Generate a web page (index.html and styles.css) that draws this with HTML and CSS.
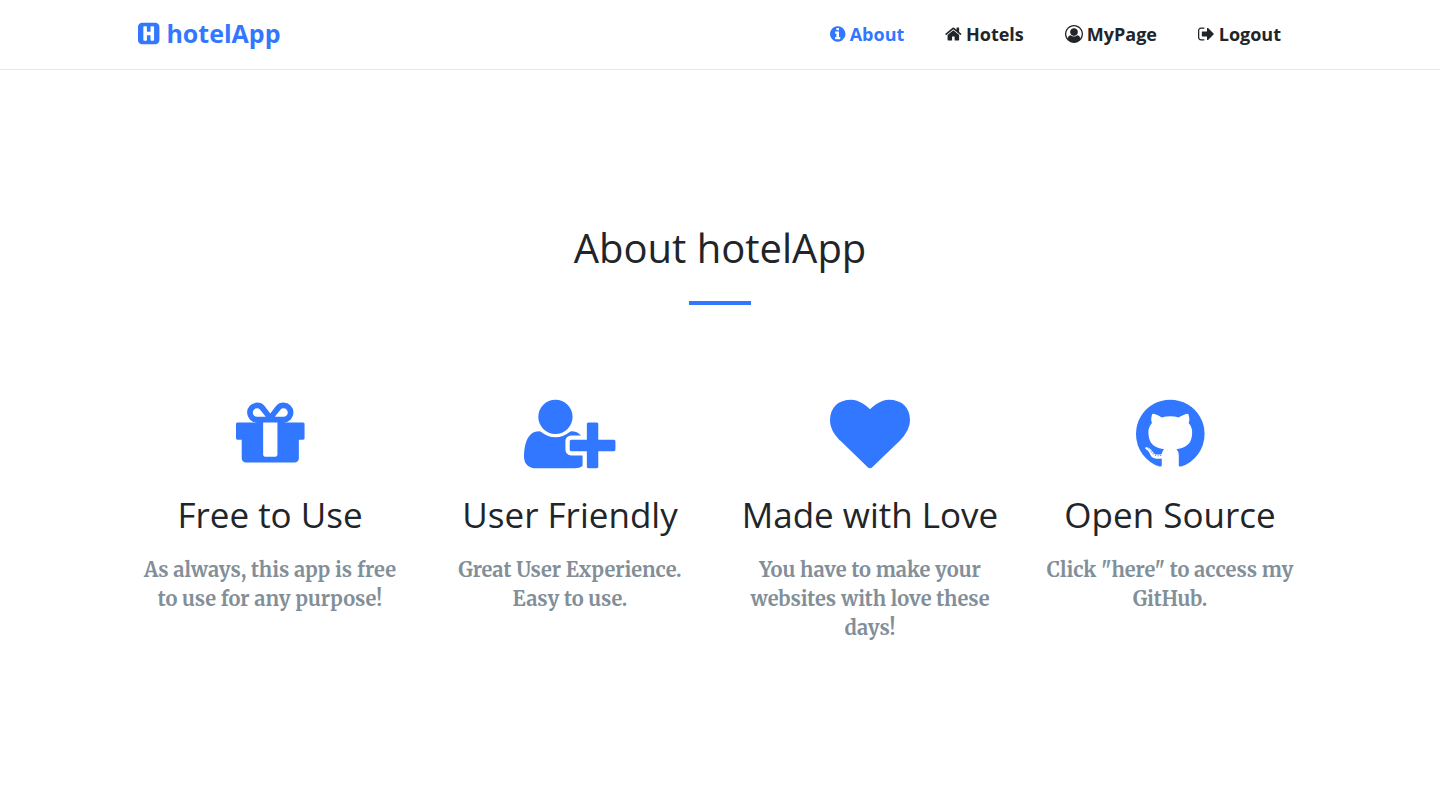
FILE: index.html
```html
<!DOCTYPE html>
<html lang="en">
<head>
<meta charset="utf-8">
<meta name="viewport" content="width=device-width, initial-scale=1">
<title>hotelApp</title>
<link rel="stylesheet" href="styles.css">
</head>
<body>
<header class="navbar">
  <div class="navbar-inner">
    <a class="brand" href="#">
      <svg class="icon" viewBox="128 0 1536 1792" aria-hidden="true"><path d="M1280 1344v-896q0-26-19-45t-45-19h-128q-26 0-45 19t-19 45v320h-256v-320q0-26-19-45t-45-19h-128q-26 0-45 19t-19 45v896q0 26 19 45t45 19h128q26 0 45-19t19-45v-320h256v320q0 26 19 45t45 19h128q26 0 45-19t19-45zm384-928v960q0 119-84.500 203.500t-203.500 84.500h-960q-119 0-203.500-84.500t-84.500-203.500v-960q0-119 84.500-203.500t203.500-84.500h960q119 0 203.500 84.500t84.500 203.500z"/></svg>
      <span>hotelApp</span>
    </a>
    <nav class="menu" aria-label="Main">
      <a class="menu-link active" href="#about">
        <svg class="icon" viewBox="128 0 1536 1792" aria-hidden="true"><path d="M1152 1376v-160q0-14-9-23t-23-9h-96v-512q0-14-9-23t-23-9h-320q-14 0-23 9t-9 23v160q0 14 9 23t23 9h96v320h-96q-14 0-23 9t-9 23v160q0 14 9 23t23 9h448q14 0 23-9t9-23zm-128-896v-160q0-14-9-23t-23-9h-192q-14 0-23 9t-9 23v160q0 14 9 23t23 9h192q14 0 23-9t9-23zm640 416q0 209-103 385.500t-279.500 279.500-385.500 103-385.500-103-279.500-279.500-103-385.500 103-385.500 279.500-279.500 385.500-103 385.500 103 279.500 279.500 103 385.500z"/></svg>
        <span>About</span>
      </a>
      <a class="menu-link" href="#hotels">
        <svg class="icon" viewBox="64 0 1664 1792" aria-hidden="true"><path d="M1472 992v480q0 26-19 45t-45 19h-384v-384h-256v384h-384q-26 0-45-19t-19-45v-480q0-1 .5-3t.5-3l575-474 575 474q1 2 1 6zm223-69l-62 74q-8 9-21 11h-3q-13 0-21-7l-692-577-692 577q-12 8-24 7-13-2-21-11l-62-74q-8-10-7-23.500t11-21.500l719-599q32-26 76-26t76 26l244 204v-195q0-14 9-23t23-9h192q14 0 23 9t9 23v408l219 182q10 8 11 21.500t-7 23.500z"/></svg>
        <span>Hotels</span>
      </a>
      <a class="menu-link" href="#mypage">
        <svg class="icon" viewBox="0 0 1792 1792" aria-hidden="true"><path d="M896 0q182 0 348 71t286 191 191 286 71 348q0 181-70.500 347t-190.500 286-286 191.500-349 71.500-349-71-285.500-191.500-190.500-286-71-347.500 71-348 191-286 286-191 348-71zm619 1351q149-205 149-455 0-156-61-298t-164-245-245-164-298-61-298 61-245 164-164 245-61 298q0 250 149 455 66-327 306-327 131 128 313 128t313-128q240 0 306 327zm-235-647q0-159-112.500-271.500t-271.500-112.500-271.500 112.500-112.500 271.500 112.500 271.500 271.500 112.500 271.500-112.500 112.500-271.500z"/></svg>
        <span>MyPage</span>
      </a>
      <a class="menu-link" href="#logout">
        <svg class="icon" viewBox="64 0 1664 1792" aria-hidden="true"><path d="M704 1440q0 4 1 20t.5 26.500-3 23.500-10 19.500-20.500 6.500h-320q-119 0-203.500-84.500t-84.500-203.500v-704q0-119 84.500-203.500t203.500-84.500h320q13 0 22.500 9.500t9.500 22.500q0 4 1 20t.5 26.500-3 23.500-10 19.500-20.500 6.500h-320q-66 0-113 47t-47 113v704q0 66 47 113t113 47h312l11.500 1 11.500 3 8 5.500 7 9 2 13.500zm928-544q0 26-19 45l-544 544q-19 19-45 19t-45-19-19-45v-288h-448q-26 0-45-19t-19-45v-384q0-26 19-45t45-19h448v-288q0-26 19-45t45-19 45 19l544 544q19 19 19 45z"/></svg>
        <span>Logout</span>
      </a>
    </nav>
  </div>
</header>
<main class="about" id="about">
  <h1 class="title">About hotelApp</h1>
  <hr class="divider">
  <div class="features">
    <section class="feature">
      <svg class="feature-icon" viewBox="128 0 1536 1792" aria-hidden="true"><path d="M1056 1356v-716h-320v716q0 25 18 38.500t46 13.500h192q28 0 46-13.500t18-38.500zm-456-844h195l-126-161q-26-31-69-31-40 0-68 28t-28 68 28 68 68 28zm688-96q0-40-28-68t-68-28q-43 0-69 31l-125 161h194q40 0 68-28t28-68zm376 256v320q0 14-9 23t-23 9h-96v416q0 40-28 68t-68 28h-1088q-40 0-68-28t-28-68v-416h-96q-14 0-23-9t-9-23v-320q0-14 9-23t23-9h440q-93 0-158.500-65.500t-65.500-158.500 65.500-158.500 158.500-65.500q107 0 168 77l128 165 128-165q61-77 168-77 93 0 158.500 65.500t65.500 158.500-65.500 158.500-158.500 65.500h440q14 0 23 9t9 23z"/></svg>
      <h2 class="feature-title">Free to Use</h2>
      <p class="feature-text">As always, this app is free to use for any purpose!</p>
    </section>
    <section class="feature">
      <svg class="feature-icon" viewBox="0 0 2048 1792" aria-hidden="true"><path d="M704 896q-159 0-271.500-112.500t-112.500-271.500 112.500-271.500 271.500-112.500 271.500 112.500 112.500 271.500-112.500 271.500-271.500 112.500zm960 128h352q13 0 22.500 9.500t9.500 22.500v192q0 13-9.500 22.500t-22.500 9.500h-352v352q0 13-9.500 22.500t-22.500 9.500h-192q-13 0-22.500-9.500t-9.500-22.500v-352h-352q-13 0-22.500-9.500t-9.500-22.500v-192q0-13 9.500-22.500t22.500-9.500h352v-352q0-13 9.500-22.500t22.500-9.500h192q13 0 22.500 9.500t9.500 22.500v352zm-736 224q0 52 38 90t90 38h256v238q-68 50-171 50h-874q-121 0-194-69t-73-190q0-53 3.500-103.500t14-109 26.500-108.500 43-97.500 62-81 85.500-53.500 111.500-20q19 0 39 17 79 61 154.500 91.500t164.500 30.500 164.500-30.500 154.500-91.500q20-17 39-17 132 0 217 96h-223q-52 0-90 38t-38 90v192z"/></svg>
      <h2 class="feature-title">User Friendly</h2>
      <p class="feature-text">Great User Experience.<br>Easy to use.</p>
    </section>
    <section class="feature">
      <svg class="feature-icon" viewBox="0 0 1792 1792" aria-hidden="true"><path d="M896 1664q-26 0-44-18l-624-602q-10-8-27.500-26t-55.500-65.500-68-97.500-53.500-121-23.500-138q0-220 127-344t351-124q62 0 126.500 21.500t120 58 95.500 68.500 76 68q36-36 76-68t95.500-68.500 120-58 126.500-21.500q224 0 351 124t127 344q0 221-229 450l-623 600q-18 18-44 18z"/></svg>
      <h2 class="feature-title">Made with Love</h2>
      <p class="feature-text">You have to make your websites with love these days!</p>
    </section>
    <section class="feature">
      <svg class="feature-icon" viewBox="128 0 1536 1792" aria-hidden="true"><path d="M896 128q209 0 385.500 103t279.500 279.500 103 385.500q0 251-146.500 451.500t-378.500 277.500q-27 5-40-7t-13-30q0-3 .5-76.500t.5-134.500q0-97-52-142 57-6 102.500-18t94-39 81-66.500 53-105 20.500-150.500q0-119-79-206 37-91-8-204-28-9-81 11t-92 44l-38 24q-93-26-192-26t-192 26q-16-11-42.500-27t-83.500-38.500-85-13.500q-45 113-8 204-79 87-79 206 0 85 20.500 150t52.500 105 80.500 67 94 39 102.500 18q-39 36-49 103-21 10-45 15t-57 5-65.500-21.500-55.500-62.500q-19-32-48.500-52t-49.500-24l-20-3q-21 0-29 4.500t-5 11.500 9 14 13 12l7 5q22 10 43.500 38t31.500 51l10 23q13 38 44 61.500t67 30 69.500 7 55.500-3.500l23-4q0 38 .5 88.500t.5 54.500q0 18-13 30t-40 7q-232-77-378.500-277.500t-146.500-451.500q0-209 103-385.500t279.500-279.500 385.500-103zm-477 1103q3-7-7-12-10-3-13 2-3 7 7 12 9 6 13-2zm31 34q7-5-2-16-10-9-16-3-7 5 2 16 10 10 16 3zm30 45q9-7 0-19-8-13-17-6-9 5 0 18t17 7zm42 42q8-8-4-19-12-12-20-3-9 8 4 19 12 12 20 3zm57 25q3-11-13-16-15-4-19 7t13 15q15 6 19-6zm63 5q0-13-17-11-16 0-16 11 0 13 17 11 16 0 16-11zm58-10q-2-11-18-9-16 3-14 15t18 8 14-14z"/></svg>
      <h2 class="feature-title">Open Source</h2>
      <p class="feature-text">Click "here" to access my GitHub.</p>
    </section>
  </div>
</main>
</body>
</html>
```
FILE: styles.css
```css
* { box-sizing: border-box; }

body {
  margin: 0;
  background: #fff;
  color: #212529;
  font-family: "Open Sans", "Noto Sans", sans-serif;
}

a { color: inherit; text-decoration: none; }
svg { display: block; overflow: visible; fill: currentColor; }

.navbar { border-bottom: 1px solid #e6e7e8; }

.navbar-inner {
  display: flex;
  align-items: flex-start;
  justify-content: space-between;
  max-width: 1200px;
  margin: 0 auto;
  padding: 16px 39px 17px 18px;
}

.brand {
  display: flex;
  align-items: center;
  gap: 7px;
  color: #3177ff;
  font-size: 25px;
  font-weight: 700;
  line-height: 34px;
}

.icon { height: 1em; }

.menu { display: flex; gap: 41px; }

.menu-link {
  display: flex;
  align-items: center;
  gap: 4px;
  font-size: 18px;
  font-weight: 700;
  line-height: 36px;
}

.menu-link.active { color: #3177ff; }

.about {
  max-width: 1200px;
  margin: 0 auto;
  padding: 154px 0 96px;
  text-align: center;
}

.title {
  margin: 0;
  font-size: 40px;
  font-weight: 400;
  line-height: 48px;
}

.divider {
  width: 62px;
  height: 4px;
  margin: 29px auto 89px;
  border: 0;
  background: #3177ff;
}

.features {
  display: grid;
  grid-template-columns: repeat(auto-fit, minmax(280px, 1fr));
}

.feature { padding: 0 18px; }

.feature-icon {
  height: 80px;
  margin: 0 auto 19px;
  color: #3177ff;
}

.feature-title {
  margin: 0 0 18px;
  font-size: 35px;
  font-weight: 400;
  line-height: 44px;
}

.feature-text {
  margin: 0;
  color: #828f99;
  font-family: Merriweather, "DejaVu Serif Condensed", "DejaVu Serif", serif;
  font-size: 20px;
  font-weight: 700;
  line-height: 29px;
}
```
